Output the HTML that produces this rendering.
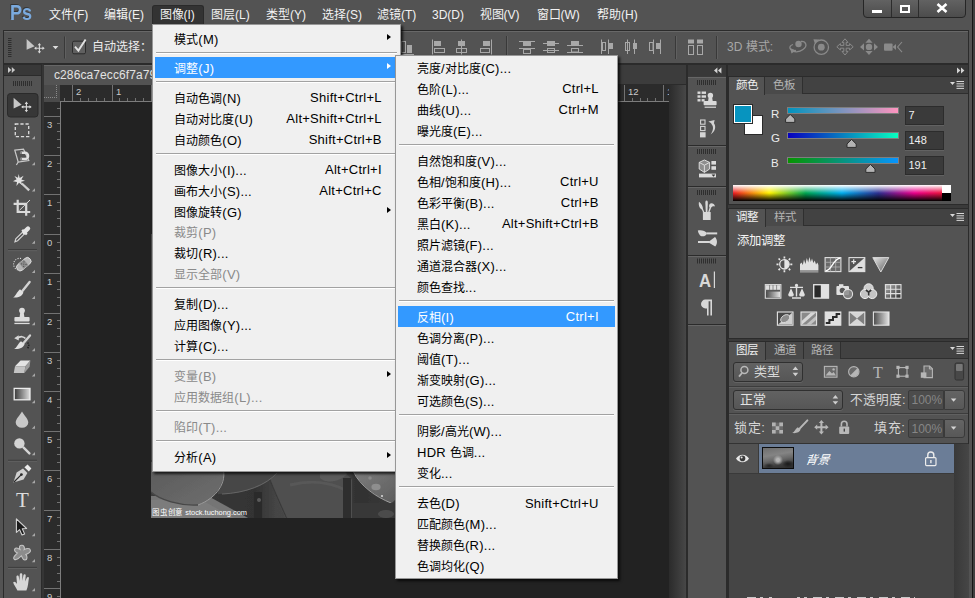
<!DOCTYPE html>
<html lang="zh-CN">
<head>
<meta charset="utf-8">
<title>Ps</title>
<style>
*{box-sizing:border-box;margin:0;padding:0}
html,body{width:975px;height:598px;overflow:hidden}
body{position:relative;background:#535353;font-family:"Liberation Sans",sans-serif;font-size:12px;color:#e4e4e4}
.abs{position:absolute}
/* ---------- menubar ---------- */
#menubar{position:absolute;left:0;top:0;width:975px;height:30px;background:#535353}
#menubar .mi{position:absolute;top:8px;height:14px;line-height:14px;font-size:12px;color:#f2f2f2;white-space:nowrap}
#pslogo{position:absolute;left:9.6px;top:0.5px;font-size:22px;line-height:24px;font-weight:bold;color:#7aaade;text-shadow:-1px -1px 0 rgba(30,30,30,.55);transform:scaleX(.82);transform-origin:0 0}
#mactive{position:absolute;left:152px;top:5px;width:52px;height:20px;background:#333;border:1px solid #2a2a2a;border-bottom:none;border-radius:3px 3px 0 0}
#winbtns{position:absolute;left:863px;top:-1px;width:103px;height:19px;border:1px solid #262626;border-radius:0 0 4px 4px;background:linear-gradient(#626262,#4c4c4c)}
#winbtns i{position:absolute;top:0;width:1px;height:17px;background:#2c2c2c}
/* ---------- option bar ---------- */
#optbar{position:absolute;left:3px;top:30px;width:966px;height:34px;border:1px solid #2b2b2b;background:#535353;box-shadow:inset 0 1px 0 #686868}
.vsep{position:absolute;width:1px;background:#3a3a3a;box-shadow:1px 0 0 #616161}
/* ---------- toolbar ---------- */
#tools{position:absolute;left:3px;top:64px;width:39px;height:540px;background:#535353;border:1px solid #2b2b2b}
#tools .hd{position:absolute;left:0;top:0;width:37px;height:11px;background:#383838;border-bottom:1px solid #2b2b2b}
.grip{position:absolute;height:5px;background:repeating-linear-gradient(90deg,#2e2e2e 0 1px,transparent 1px 2px)}
.tsep{position:absolute;left:4px;width:29px;height:1px;background:#3c3c3c;box-shadow:0 1px 0 #616161}
.tool{position:absolute;left:6px;width:26px;height:26px}
.tool svg{position:absolute;left:0;top:0}
.tri{position:absolute;right:-3px;bottom:-1px;width:0;height:0;border-left:4px solid transparent;border-bottom:4px solid #9a9a9a}
/* ---------- document ---------- */
#doc{position:absolute;left:42px;top:64px;width:645px;height:540px;background:#222;border:1px solid #2b2b2b;border-left:2px solid #353535;overflow:hidden}
#tabbar{position:absolute;left:0;top:0;width:642px;height:20px;background:#3c3c3c;border-bottom:1px solid #2b2b2b}
#tab{position:absolute;left:0;top:0;width:160px;height:20px;background:#535353;border-right:1px solid #2b2b2b;box-shadow:inset 0 1px 0 #666;font-size:12px;line-height:21px;padding-left:10px;color:#e2e2e2;white-space:nowrap;letter-spacing:.1px}
#hruler{position:absolute;left:16px;top:20px;width:610px;height:17px;background:#2b2b2b;border-bottom:1px solid #7c7c7c}
#vruler{position:absolute;left:0;top:37px;width:17px;height:520px;background:#2b2b2b;border-right:1px solid #7c7c7c}
#rcorner{position:absolute;left:0;top:20px;width:16px;height:17px;background:#4a4a4a}
.rl{position:absolute;font-size:9.5px;line-height:9px;color:#cacaca}
/* ---------- dock ---------- */
#dock{position:absolute;left:687px;top:64px;width:282px;height:540px;background:#3a3a3a;border:1px solid #2b2b2b}
#dockhd{position:absolute;left:0;top:0;width:280px;height:11px;background:#383838}
#strip{position:absolute;left:0;top:12px;width:38px;height:530px}
.sgrp{position:absolute;left:0;width:38px;background:#535353;border-top:1px solid #666;border-bottom:1px solid #2b2b2b}
.panel{position:absolute;left:40px;width:240px;background:#535353;border:1px solid #2b2b2b;border-right:none}
.ptabs{position:absolute;left:0;top:0;width:239px;height:17px;background:#424242;border-bottom:1px solid #2f2f2f}
.ptab{position:absolute;top:0;height:17px;line-height:17px;font-size:11.5px;text-align:center;color:#b4b4b4;background:#4a4a4a;border-right:1px solid #2f2f2f}
.ptab.on{background:#535353;color:#f0f0f0;height:18px}
.pmenu{position:absolute;right:4px;top:5px;width:14px;height:8px}
.inp{position:absolute;background:#3a3a3a;border:1px solid #2c2c2c;box-shadow:0 1px 0 #626262;color:#f0f0f0;font-size:11px;line-height:16px;padding-left:3px}
.drop{position:absolute;border:1px solid #303030;border-radius:3px;background:linear-gradient(#626262,#565656);box-shadow:0 1px 0 #646464}
/* ---------- popup menus ---------- */
.menu{position:absolute;background:#f0f0f0;border:1px solid #979797;box-shadow:2px 2px 2.5px rgba(0,0,0,.75);color:#000;font-size:12px}
.menu .it{position:relative;height:20.92px;line-height:20.92px;white-space:nowrap}
.menu .it span.l{position:absolute;top:2.0px}
.menu .it span.r{position:absolute;top:1.5px;text-align:right;font-size:13px;letter-spacing:.25px;margin-right:-.25px}
.menu .e{font-size:13px;letter-spacing:.25px}
#m2 .it{height:20.98px}
#m1 .sp:nth-child(2){height:8.3px}
#m2 .sp{height:9.25px}
.menu .it.dis{color:#8a8a8a}
.menu .it.hl{background:#3399ff;color:#fff}
.menu .sp{height:9.1px;position:relative}
.menu .sp i{position:absolute;left:1px;right:1px;top:3.3px;height:1px;background:#a2a2a2;box-shadow:0 1px 0 #fff}
.arr{position:absolute;top:6.3px;width:0;height:0;border-top:3.9px solid transparent;border-bottom:3.9px solid transparent;border-left:4.4px solid #000}
.hl .arr{border-left-color:#fff}
</style>
</head>
<body>
<!-- MENUBAR -->
<div id="menubar">
  <div id="pslogo">Ps</div>
  <div id="mactive"></div>
  <div class="mi" style="left:49px">文件(F)</div>
  <div class="mi" style="left:104px">编辑(E)</div>
  <div class="mi" style="left:159.5px">图像(I)</div>
  <div class="mi" style="left:211px">图层(L)</div>
  <div class="mi" style="left:266px">类型(Y)</div>
  <div class="mi" style="left:322px">选择(S)</div>
  <div class="mi" style="left:377px">滤镜(T)</div>
  <div class="mi" style="left:432px">3D(D)</div>
  <div class="mi" style="left:479.5px">视图(V)</div>
  <div class="mi" style="left:536.5px">窗口(W)</div>
  <div class="mi" style="left:597px">帮助(H)</div>
  <div id="winbtns"><i style="left:27px"></i><i style="left:54px"></i>
    <div class="abs" style="left:8px;top:10px;width:10px;height:3px;background:#fff"></div>
    <div class="abs" style="left:36px;top:5px;width:10px;height:8px;border:2px solid #fff"></div>
    <svg class="abs" style="left:72px;top:3px" width="12" height="10" viewBox="0 0 12 10"><path d="M1.5 1 L10.5 9 M10.5 1 L1.5 9" stroke="#fff" stroke-width="2.6"/></svg>
  </div>
</div>
<!-- OPTION BAR -->
<div id="optbar">
</div>
<!-- TOOLBAR -->
<div id="tools"><div class="hd"></div>
</div>
<!-- DOCUMENT -->
<div id="doc">
  <div id="tabbar"><div id="tab">c286ca7ecc6f7a79</div></div>
  <div id="hruler"></div>
  <div id="vruler"></div>
  <div id="rcorner"></div>
  <div class="abs" style="left:625px;top:20px;width:17px;height:520px;background:linear-gradient(90deg,#2b2b2b,#474747)"></div>
  <svg id="photo" class="abs" style="left:107px;top:169px" width="395" height="284" viewBox="151 234 395 284">
    <defs><filter id="bl" x="-5%" y="-5%" width="110%" height="110%"><feGaussianBlur stdDeviation="0.7"/></filter>
    <linearGradient id="lf1" x1="0" y1="0" x2="1" y2="1"><stop offset="0" stop-color="#5a5a5a"/><stop offset="1" stop-color="#6e6e6e"/></linearGradient>
    <linearGradient id="lf5" x1="0" y1="0" x2="1" y2="1"><stop offset="0" stop-color="#808080"/><stop offset="1" stop-color="#5c5c5c"/></linearGradient>
    <linearGradient id="bg0" x1="0" y1="0" x2="1" y2="0"><stop offset="0" stop-color="#3c3c3c"/><stop offset=".42" stop-color="#333"/><stop offset=".5" stop-color="#454545"/><stop offset=".78" stop-color="#484848"/><stop offset=".82" stop-color="#303030"/><stop offset="1" stop-color="#3c3c3c"/></linearGradient></defs>
    <rect x="151" y="234" width="395" height="284" fill="#4a4a4a"/>
    <g filter="url(#bl)">
    <rect x="151" y="460" width="250" height="60" fill="url(#bg0)"/>
    <!-- center big leaf -->
    <path d="M268 470 C300 462 345 466 352 480 L352 520 L286 520 C280 505 272 490 268 470 Z" fill="#4f4f4f"/>
    <path d="M270 480 C276 495 282 508 287 519" stroke="#3a3a3a" stroke-width="1.2" fill="none"/>
    <path d="M290 485 C310 480 330 482 345 490" stroke="#585858" stroke-width="3" fill="none"/>
    <!-- leaf 2 dark -->
    <path d="M212 466 C240 462 268 466 277 472 C268 486 245 494 218 494 Z" fill="#474747"/>
    <path d="M222 494 C246 493 266 485 277 473" stroke="#6a6a6a" stroke-width="0.9" fill="none"/>
    <!-- bottom-left light leaf -->
    <path d="M151 496 L208 496 L250 519 L151 519 Z" fill="#747474"/>
    <path d="M151 500 L196 497 L236 519 L151 519 Z" fill="#7c7c7c"/>
    <!-- leaf 1 -->
    <path d="M151 462 L222 462 C228 478 218 498 198 505 C180 506 160 500 151 492 Z" fill="url(#lf1)"/>
    <path d="M223 468 C227 482 217 498 198 505" stroke="#9a9a9a" stroke-width="1" fill="none"/>
    <path d="M151 492 C160 500 180 506 198 505" stroke="#474747" stroke-width="1.4" fill="none"/>
    <!-- dark gaps -->
    <rect x="254" y="492" width="8" height="28" fill="#2a2a2a"/>
    <circle cx="259" cy="500" r="2" fill="#5a5a5a"/>
    <rect x="343" y="478" width="8" height="42" fill="#2e2e2e"/>
    <!-- small top leaf -->
    <path d="M320 468 C330 466 343 468 347 474 C340 482 326 484 320 478 Z" fill="#5c5c5c"/>
    <!-- right leaf -->
    <path d="M352 468 L398 468 L398 494 C397 498 394 502 391 503 C375 496 358 484 352 468 Z" fill="url(#lf5)"/>
    <path d="M353 471 C360 486 376 497 391 503" stroke="#a8a8a8" stroke-width="0.9" fill="none"/>
    <ellipse cx="376" cy="487" rx="4.6" ry="3.2" fill="#8e8e8e"/><circle cx="370" cy="478" r="1.8" fill="#8a8a8a"/><circle cx="382" cy="496" r="1" fill="#ddd"/>
    <rect x="352" y="503" width="46" height="16" fill="#383838"/><ellipse cx="386" cy="514" rx="8" ry="4" fill="#4c4c4c"/>
    </g>
    <text x="152" y="514.8" font-family="Liberation Sans, sans-serif" font-size="7.6" fill="#fff" textLength="95" lengthAdjust="spacingAndGlyphs">图虫创意 stock.tuchong.com</text>
  </svg>
</div>
<!--RUL-->
<svg class="abs" style="left:0;top:0" width="975" height="598" viewBox="0 0 975 598" fill="none">
<path d="M44 97.5 H58" stroke="#8a8a8a" stroke-dasharray="1 1"/><path d="M56.5 85 V99" stroke="#8a8a8a" stroke-dasharray="1 1"/>
<path d="M64.5 98 V101 M72.5 85 V101 M80.5 98 V101 M88.5 98 V101 M96.5 98 V101 M104.5 98 V101 M112.5 85 V101 M119.5 98 V101 M127.5 98 V101 M135.5 98 V101 M143.5 98 V101 M151.5 85 V101 M159.5 98 V101 M167.5 98 V101 M175.5 98 V101 M183.5 98 V101 M190.5 85 V101 M198.5 98 V101 M206.5 98 V101 M214.5 98 V101 M222.5 98 V101 M230.5 85 V101 M238.5 98 V101 M246.5 98 V101 M253.5 98 V101 M261.5 98 V101 M269.5 85 V101 M277.5 98 V101 M285.5 98 V101 M293.5 98 V101 M301.5 98 V101 M309.5 85 V101 M316.5 98 V101 M324.5 98 V101 M332.5 98 V101 M340.5 98 V101 M348.5 85 V101 M356.5 98 V101 M364.5 98 V101 M372.5 98 V101 M380.5 98 V101 M387.5 85 V101 M395.5 98 V101 M403.5 98 V101 M411.5 98 V101 M419.5 98 V101 M427.5 85 V101 M435.5 98 V101 M443.5 98 V101 M450.5 98 V101 M458.5 98 V101 M466.5 85 V101 M474.5 98 V101 M482.5 98 V101 M490.5 98 V101 M498.5 98 V101 M506.5 85 V101 M513.5 98 V101 M521.5 98 V101 M529.5 98 V101 M537.5 98 V101 M545.5 85 V101 M553.5 98 V101 M561.5 98 V101 M569.5 98 V101 M577.5 98 V101 M584.5 85 V101 M592.5 98 V101 M600.5 98 V101 M608.5 98 V101 M616.5 98 V101 M624.5 85 V101 M632.5 98 V101 M640.5 98 V101 M647.5 98 V101 M655.5 98 V101 M663.5 85 V101" stroke="#727272"/>
<path d="M57 108.5 H60 M44 116.5 H60 M57 123.5 H60 M57 131.5 H60 M57 139.5 H60 M57 147.5 H60 M44 155.5 H60 M57 163.5 H60 M57 171.5 H60 M57 179.5 H60 M57 187.5 H60 M44 194.5 H60 M57 202.5 H60 M57 210.5 H60 M57 218.5 H60 M57 226.5 H60 M44 234.5 H60 M57 242.5 H60 M57 250.5 H60 M57 257.5 H60 M57 265.5 H60 M44 273.5 H60 M57 281.5 H60 M57 289.5 H60 M57 297.5 H60 M57 305.5 H60 M44 313.5 H60 M57 320.5 H60 M57 328.5 H60 M57 336.5 H60 M57 344.5 H60 M44 352.5 H60 M57 360.5 H60 M57 368.5 H60 M57 376.5 H60 M57 384.5 H60 M44 391.5 H60 M57 399.5 H60 M57 407.5 H60 M57 415.5 H60 M57 423.5 H60 M44 431.5 H60 M57 439.5 H60 M57 447.5 H60 M57 454.5 H60 M57 462.5 H60 M44 470.5 H60 M57 478.5 H60 M57 486.5 H60 M57 494.5 H60 M57 502.5 H60 M44 510.5 H60 M57 517.5 H60 M57 525.5 H60 M57 533.5 H60 M57 541.5 H60 M44 549.5 H60 M57 557.5 H60 M57 565.5 H60 M57 573.5 H60 M57 581.5 H60 M44 588.5 H60 M57 596.5 H60" stroke="#727272"/>
</svg>
<div class="abs" style="left:44px;top:85px;width:625px;height:520px;overflow:hidden">
<div class="rl" style="left:32px;top:2px">2</div>
<div class="rl" style="left:72px;top:2px">1</div>
<div class="rl" style="left:111px;top:2px">0</div>
<div class="rl" style="left:150px;top:2px">1</div>
<div class="rl" style="left:190px;top:2px">2</div>
<div class="rl" style="left:229px;top:2px">3</div>
<div class="rl" style="left:269px;top:2px">4</div>
<div class="rl" style="left:308px;top:2px">5</div>
<div class="rl" style="left:347px;top:2px">6</div>
<div class="rl" style="left:387px;top:2px">7</div>
<div class="rl" style="left:426px;top:2px">8</div>
<div class="rl" style="left:466px;top:2px">9</div>
<div class="rl" style="left:505px;top:2px">10</div>
<div class="rl" style="left:544px;top:2px">11</div>
<div class="rl" style="left:584px;top:2px">12</div>
<div class="rl" style="left:623px;top:2px">13</div>
<div class="rl" style="left:3px;top:34.5px">3</div>
<div class="rl" style="left:3px;top:73.5px">2</div>
<div class="rl" style="left:3px;top:112.5px">1</div>
<div class="rl" style="left:3px;top:152.5px">0</div>
<div class="rl" style="left:3px;top:191.5px">1</div>
<div class="rl" style="left:3px;top:231.5px">2</div>
<div class="rl" style="left:3px;top:270.5px">3</div>
<div class="rl" style="left:3px;top:309.5px">4</div>
<div class="rl" style="left:3px;top:349.5px">5</div>
<div class="rl" style="left:3px;top:388.5px">6</div>
<div class="rl" style="left:3px;top:428.5px">7</div>
<div class="rl" style="left:3px;top:467.5px">8</div>
<div class="rl" style="left:3px;top:506.5px">9</div>
</div>
<!--/RUL-->
<!-- DOCK -->
<div id="dock">
  <div id="dockhd"></div>
  <div class="abs" style="left:38px;top:0;width:2px;height:540px;background:#2b2b2b"></div>
  <div class="sgrp" style="top:12px;height:69px"></div>
  <div class="sgrp" style="top:81px;height:41px"></div>
  <div class="sgrp" style="top:122px;height:69px"></div>
  <div class="sgrp" style="top:191px;height:69px"></div>
  <div class="sgrp" style="top:260px;height:290px"></div>
  <!-- COLOR PANEL -->
  <div class="panel" style="top:11px;height:129px">
    <div class="ptabs"><div class="ptab on" style="left:0;width:36px">颜色</div><div class="ptab" style="left:36px;width:38px">色板</div></div>
    <div class="abs" style="left:14.5px;top:38px;width:19.5px;height:20px;background:#fff;border:1px solid #2a2a2a"></div>
    <div class="abs" style="left:4.5px;top:27.5px;width:18.5px;height:18.5px;background:#0794bf;border:1px solid #fff;outline:1px solid #2a2a2a"></div>
    <div class="abs" style="left:42px;top:29.5px;font-size:11.5px;line-height:14px;color:#ececec">R</div>
    <div class="abs" style="left:42px;top:54px;font-size:11.5px;line-height:14px;color:#ececec">G</div>
    <div class="abs" style="left:42px;top:79px;font-size:11.5px;line-height:14px;color:#ececec">B</div>
    <div class="abs" style="left:58px;top:30px;width:112px;height:6.5px;border:1px solid #7e7e7e;background:linear-gradient(90deg,#0094bf,#ff94bf)"></div>
    <div class="abs" style="left:58px;top:55px;width:112px;height:6.5px;border:1px solid #7e7e7e;background:linear-gradient(90deg,#0700bf,#07ffbf)"></div>
    <div class="abs" style="left:58px;top:80px;width:112px;height:6.5px;border:1px solid #7e7e7e;background:linear-gradient(90deg,#079400,#0794ff)"></div>
    <div class="inp" style="left:175.5px;top:28.5px;width:39px;height:19px">7</div>
    <div class="inp" style="left:175.5px;top:53.5px;width:39px;height:19px">148</div>
    <div class="inp" style="left:175.5px;top:78.5px;width:39px;height:19px">191</div>
    <div class="abs" style="left:4px;top:108px;width:218px;height:16px;background:linear-gradient(180deg,#fff 0,rgba(255,255,255,0) 50%,rgba(0,0,0,0) 50%,#000 100%),linear-gradient(90deg,#ed1c24 0,#fff200 16.6%,#00a651 33.3%,#00aeef 50%,#2e3192 66.6%,#ec008c 83.3%,#ed1c24 100%)"></div>
    <div class="abs" style="left:213px;top:108px;width:9px;height:8px;background:#fff"></div>
    <div class="abs" style="left:213px;top:116px;width:9px;height:8px;background:#000"></div>
  </div>
  <!-- ADJUST PANEL -->
  <div class="panel" style="top:143px;height:131px">
    <div class="ptabs"><div class="ptab on" style="left:0;width:37px">调整</div><div class="ptab" style="left:37px;width:38px">样式</div></div>
    <div class="abs" style="left:8px;top:24.5px;font-size:12.4px;line-height:14px;color:#f4f4f4;white-space:nowrap">添加调整</div>
  </div>
  <!-- LAYERS PANEL -->
  <div class="panel" style="top:276px;height:270px">
    <div class="ptabs"><div class="ptab on" style="left:0;width:37px">图层</div><div class="ptab" style="left:37px;width:38px">通道</div><div class="ptab" style="left:75px;width:37px">路径</div></div>
    <div class="drop" style="left:4px;top:20px;width:70px;height:19.5px"></div>
    <div class="abs" style="left:24.5px;top:22.5px;font-size:13px;line-height:14px;color:#d8d8d8;white-space:nowrap">类型</div>
    <div class="abs" style="left:0;top:43.5px;width:239px;height:1px;background:#3c3c3c;box-shadow:0 1px 0 #606060"></div>
    <div class="drop" style="left:4px;top:48px;width:110px;height:20px"></div>
    <div class="abs" style="left:11px;top:51px;font-size:13px;line-height:14px;color:#e2e2e2;white-space:nowrap">正常</div>
    <div class="abs" style="left:121px;top:51px;font-size:12.7px;line-height:14px;color:#d6d6d6;white-space:nowrap">不透明度:</div>
    <div class="abs" style="left:178.5px;top:48px;width:36px;height:20px;background:#4c4c4c;border:1px solid #3a3a3a;border-radius:2px 0 0 2px;font-size:12px;line-height:19px;color:#868686;padding-left:3px">100%</div>
    <div class="abs" style="left:214.5px;top:48px;width:21px;height:20px;border:1px solid #3a3a3a;border-radius:0 3px 3px 0;background:linear-gradient(#646464,#585858)"></div>
    <div class="abs" style="left:0;top:71px;width:239px;height:1px;background:#3c3c3c;box-shadow:0 1px 0 #606060"></div>
    <div class="abs" style="left:5px;top:78.5px;font-size:13px;line-height:14px;color:#d6d6d6;white-space:nowrap;letter-spacing:.6px">锁定:</div>
    <div class="abs" style="left:145px;top:78.5px;font-size:13px;line-height:14px;color:#d6d6d6;white-space:nowrap;letter-spacing:.6px">填充:</div>
    <div class="abs" style="left:178.5px;top:76.5px;width:36px;height:19.5px;background:#4c4c4c;border:1px solid #3a3a3a;border-radius:2px 0 0 2px;font-size:12px;line-height:19px;color:#868686;padding-left:3px">100%</div>
    <div class="abs" style="left:214.5px;top:76.5px;width:21px;height:19.5px;border:1px solid #3a3a3a;border-radius:0 3px 3px 0;background:linear-gradient(#646464,#585858)"></div>
    <div class="abs" style="left:0;top:101px;width:239px;height:171px;background:#454545;border-top:1px solid #333"></div>
    <div class="abs" style="left:224.5px;top:102px;width:15px;height:171px;background:linear-gradient(90deg,#393939,#464646)"></div>
    <div class="abs" style="left:0;top:102px;width:30px;height:30px;background:#535353;border-right:1px solid #3a3a3a;border-bottom:1px solid #3a3a3a"></div>
    <div class="abs" style="left:30px;top:102px;width:194.5px;height:30px;background:#6b7d97;border-bottom:1px solid #3a3a3a"></div>
    <div class="abs" style="left:32.5px;top:105px;width:32.5px;height:22px;border:1px solid #0c0c0c;background:radial-gradient(ellipse 5px 5px at 15px 12px,#b4b4b4 30%,rgba(150,150,150,0) 100%),radial-gradient(ellipse 6px 4px at 25px 16px,#1e1e1e 20%,rgba(40,40,40,0) 100%),radial-gradient(ellipse 5px 3px at 6px 18px,#2a2a2a 20%,rgba(40,40,40,0) 100%),linear-gradient(170deg,#6e6e6e 0,#848484 35%,#6a6a6a 55%,#3a3a3a 80%,#2c2c2c 100%)"></div>
    <div class="abs" style="left:77px;top:110.5px;font-size:12px;line-height:14px;color:#fff;font-style:italic;white-space:nowrap;transform:skewX(-8deg)">背景</div>
  </div>
</div>
<!--DI-->
<svg class="abs" style="left:0;top:0" width="975" height="598" viewBox="0 0 975 598" fill="none">
<defs>
<linearGradient id="g1" x1="0" x2="1" y1="0" y2="0"><stop offset="0" stop-color="#4a4a4a"/><stop offset="1" stop-color="#e4e4e4"/></linearGradient>
<linearGradient id="g3" x1="0" x2="1" y1="0" y2="1"><stop offset="0" stop-color="#b0b0b0"/><stop offset="1" stop-color="#2a2a2a"/></linearGradient>
<linearGradient id="g2" x1="0" x2="1" y1="0" y2="1"><stop offset="0" stop-color="#e8e8e8"/><stop offset="1" stop-color="#5a5a5a"/></linearGradient>
<path id="th" d="M0 0 L4.6 4.6 V8 H-4.6 V4.6 Z" fill="#b4b4b4" stroke="#2e2e2e" stroke-width="1"/>
<g id="pm"><path d="M0 1 H5 L2.5 4 Z" fill="#d8d8d8"/><path d="M6.5 0.5 H14 M6.5 2.8 H14 M6.5 5.1 H14 M6.5 7.4 H14" stroke="#d8d8d8" stroke-width="1"/></g>
<g id="sg"><path d="M0.5 0 V5 M2.5 0 V5 M4.5 0 V5 M6.5 0 V5 M8.5 0 V5 M10.5 0 V5 M12.5 0 V5 M14.5 0 V5 M16.5 0 V5 M18.5 0 V5" stroke="#2e2e2e"/></g>
<g id="ud"><path d="M0 3.4 L2.8 0 L5.6 3.4 Z M0 6.2 L2.8 9.6 L5.6 6.2 Z" fill="#cfcfcf"/></g>
</defs>
<!-- header arrows -->
<path d="M717.4 67.4 V73.4 L714 70.4 Z M721.4 67.4 V73.4 L718 70.4 Z" fill="#d4d4d4"/>
<path d="M957 67.4 V73.4 L960.4 70.4 Z M961 67.4 V73.4 L964.4 70.4 Z" fill="#d4d4d4"/>
<!-- strip grips -->
<use href="#sg" x="697" y="80"/><use href="#sg" x="697" y="149"/><use href="#sg" x="697" y="190"/><use href="#sg" x="697" y="258.5"/>
<!-- strip icon 1: history (list + stamp) -->
<g fill="#dadada"><rect x="697.5" y="91.5" width="3" height="2.4"/><rect x="697.5" y="95.3" width="3" height="2.4"/><rect x="697.5" y="99.1" width="3" height="2.4"/><rect x="701.6" y="91.5" width="4.4" height="2.4"/><rect x="701.6" y="95.3" width="4.4" height="2.4"/><rect x="701.6" y="99.1" width="3" height="2.4"/>
<circle cx="710.4" cy="95.4" r="2.7"/><path d="M708.8 96.5 H712 L712.8 101.4 H708 Z"/><rect x="703.6" y="101" width="13" height="4.2" rx="0.8"/><rect x="704.6" y="106.6" width="11.4" height="1.2"/></g>
<!-- strip icon 2: actions -->
<g stroke="#d4d4d4" stroke-width="1.1"><rect x="700.6" y="120" width="4.4" height="4.2"/><rect x="700.6" y="126.4" width="4.4" height="4.2"/></g><rect x="700" y="132.2" width="5.6" height="5.2" fill="#d4d4d4"/>
<path d="M711 121.4 C716.4 122.6 717 130.4 710.6 134.4 C713.4 130.4 713.8 126.4 711.6 124.2 Z" fill="#d4d4d4"/><path d="M708.4 121.6 L714.6 120 L713.6 124.8 Z" fill="#d4d4d4"/>
<!-- strip icon 3: 3D -->
<g><path d="M704.4 160 L709.6 162.4 V169 L704.4 172.4 L699.2 169 V162.4 Z" fill="#8e8e8e" stroke="#dcdcdc" stroke-width="1"/><path d="M699.2 162.4 L704.4 165.2 L709.6 162.4 M704.4 165.2 V172.4" stroke="#dcdcdc" stroke-width="1"/><rect x="711.4" y="161" width="4.6" height="3.6" fill="#dcdcdc"/><rect x="711.4" y="166.2" width="4.6" height="3.6" fill="#dcdcdc"/><rect x="699" y="173.6" width="17" height="3.8" fill="#dcdcdc"/><path d="M711.6 174.6 H715.4 L713.5 176.8 Z" fill="#333"/></g>
<!-- strip icon 4: brush presets (cup with brushes) -->
<g fill="#d8d8d8"><rect x="702.9" y="212" width="7.8" height="8" rx="0.6"/>
<path d="M699 201.8 C701.4 203.4 703 206.4 703 209 L704.6 212.4 H703.2 L701.8 209.6 C699.6 208.6 698.2 205 699 201.8 Z"/>
<path d="M706.5 200.4 C707.8 200.4 708 202 707.8 204 L707.4 212.4 H705.8 L705.4 204 C705.2 202 705.4 200.4 706.5 200.4 Z"/>
<path d="M709.4 204.4 C711 202.4 714.4 203.4 715 206.6 C713.4 206 711.6 206.6 711 208 L709.4 212.4 H708 L709.6 207.6 C709 206.6 709 205.2 709.4 204.4 Z"/></g>
<!-- strip icon 5: brush -->
<g fill="#d8d8d8"><path d="M697.8 230.4 C701 229.6 705.4 230.6 707 233 C706.6 235.6 703.6 236.8 701.4 236.2 C699.4 235.4 698.4 233 697.8 230.4 Z"/><rect x="706.6" y="232.4" width="10.6" height="2"/>
<rect x="698" y="241" width="11.6" height="2"/><path d="M709 241.4 L715 237 C717.6 239.6 717.6 244 715.2 246.6 L709 242.8 Z"/></g>
<!-- strip icon 6: A| -->
<text x="699" y="287" font-family="Liberation Sans, sans-serif" font-size="19" font-weight="bold" fill="#d8d8d8" transform="translate(699 0) scale(.88 1) translate(-699 0)">A</text><path d="M714.4 271.6 V288" stroke="#d8d8d8" stroke-width="1.2"/>
<!-- strip icon 7: pilcrow -->
<path d="M705.4 299.6 H712 V315.4 H710.4 V301.2 H708.6 V315.4 H707 V308.4 H705.4 A4.4 4.4 0 0 1 705.4 299.6 Z" fill="#d8d8d8"/>
<!-- panel menus -->
<use href="#pm" x="950" y="81"/><use href="#pm" x="950" y="213"/><use href="#pm" x="950" y="346"/>
<!-- slider thumbs -->
<use href="#th" x="790.2" y="114.4"/><use href="#th" x="851.6" y="139.4"/><use href="#th" x="870.4" y="164.4"/>
<!-- ===== adjustment icons row1 ===== -->
<g>
<circle cx="784.4" cy="264.3" r="4.7" fill="#535353" stroke="#e6e6e6" stroke-width="1.3"/><path d="M784.4 259.6 A4.7 4.7 0 0 1 784.4 269 Z" fill="#e6e6e6"/><path d="M784.4 256.4 V258.4 M784.4 270.2 V272.2 M776.5 264.3 H778.5 M790.3 264.3 H792.3 M778.6 258.5 L780 259.9 M788.8 268.7 L790.2 270.1 M778.6 270.1 L780 268.7 M788.8 259.9 L790.2 258.5" stroke="#e6e6e6" stroke-width="1.7"/>
<path d="M800 270.6 V264 L801.6 262.6 L802.8 265 L804 259.4 L805.4 264 L806.8 258 L808.2 262.6 L809.4 257 L810.8 262 L812 258.6 L813.4 263 L814.8 260.6 L816 264.4 L817.4 262.6 L818.4 265 V270.6 Z" fill="#e0e0e0"/><path d="M800 271.9 H818.4" stroke="#bdbdbd"/>
<rect x="825.1" y="257.6" width="15.8" height="14" fill="#6a6a6a" stroke="#e0e0e0" stroke-width="1.1"/><path d="M825.1 262.3 H840.9 M825.1 267 H840.9 M830.4 257.6 V271.6 M835.7 257.6 V271.6" stroke="#b0b0b0" stroke-width="0.8"/><path d="M825.6 271 C832 270.6 833 258.6 840.4 258.2" stroke="#fff" stroke-width="1.3"/>
<rect x="849" y="257.6" width="15.8" height="14" fill="#535353" stroke="#e0e0e0" stroke-width="1.1"/><path d="M849 271.6 L864.8 257.6 V271.6 Z" fill="#e0e0e0"/><path d="M851.4 261.6 H856 M853.7 259.3 V263.9" stroke="#e8e8e8" stroke-width="1.2"/><path d="M857.8 267.6 H862.4" stroke="#333" stroke-width="1.3"/>
<path d="M872.8 257.6 H888.8 L880.8 272 Z" fill="url(#g2)" stroke="#d8d8d8" stroke-width="1"/>
</g>
<!-- row2 -->
<g>
<rect x="765.3" y="284.6" width="15.6" height="13.6" fill="#5a5a5a" stroke="#dcdcdc" stroke-width="1.1"/><rect x="766" y="285.2" width="14.2" height="4.6" fill="#e0e0e0"/><rect x="766" y="291.6" width="14.2" height="5.8" fill="url(#g1)"/><path d="M769.6 285 V290 M773 285 V290 M776.6 285 V290" stroke="#777" stroke-width="0.8"/>
<path d="M796.5 284 V296.6 M790 287.4 H803 M792 298 H801" stroke="#e0e0e0" stroke-width="1.4"/><circle cx="796.5" cy="285.4" r="1.6" fill="#e0e0e0"/><path d="M788.2 294.4 L791 288.2 L793.8 294.4 A2.8 2.2 0 0 1 788.2 294.4 Z M799.2 294.4 L802 288.2 L804.8 294.4 A2.8 2.2 0 0 1 799.2 294.4 Z" fill="#e0e0e0"/>
<rect x="813.6" y="284.6" width="15" height="13.6" fill="#e2e2e2" stroke="#e2e2e2" stroke-width="1.1"/><rect x="814.4" y="285.4" width="6.4" height="12" fill="#2a2a2a"/>
<rect x="836.4" y="286" width="12.6" height="9" rx="1" fill="#e0e0e0"/><rect x="839" y="284.2" width="4.4" height="2.4" fill="#e0e0e0"/><circle cx="842.4" cy="290.4" r="2.7" fill="#555"/><circle cx="848" cy="294" r="4.6" fill="#8a8a8a" fill-opacity=".85" stroke="#e0e0e0" stroke-width="1.1"/>
<circle cx="868.6" cy="288.4" r="4.6" fill="#cdcdcd" stroke="#ececec" stroke-width="1"/><circle cx="865" cy="294" r="4.6" fill="#c4c4c4" stroke="#ececec" stroke-width="1"/><circle cx="872.2" cy="294" r="4.6" fill="#c4c4c4" stroke="#ececec" stroke-width="1"/><path d="M866 290 L868.6 292.2 L871.2 290 M868.6 292.2 V295.6" stroke="#333" stroke-width="1.7" fill="none"/>
<rect x="885.4" y="284.6" width="15.6" height="13.6" fill="url(#g3)" stroke="#e0e0e0" stroke-width="1.1"/><path d="M885.4 289.2 H901 M885.4 293.6 H901 M890.6 284.6 V298.2 M895.8 284.6 V298.2" stroke="#e0e0e0" stroke-width="1.1"/>
</g>
<!-- row3 -->
<g>
<rect x="777.4" y="312" width="15.6" height="13.2" fill="#484848" stroke="#e4e4e4" stroke-width="1.1"/><path d="M778 324.6 V318 L785 312.6 H792.4 Z" fill="#d4d4d4" opacity=".0"/><path d="M778 324.6 L792.4 312.6 V324.6 Z" fill="#cfcfcf"/><ellipse cx="785.2" cy="318.6" rx="5" ry="3.4" fill="#8c8c8c" stroke="#e0e0e0" stroke-width=".8" transform="rotate(-35 785.2 318.6)"/>
<rect x="801" y="312" width="15.6" height="13.2" fill="#8a8a8a" stroke="#e4e4e4" stroke-width="1.1"/><path d="M801.6 321 L811 312.6 H816 L801.6 325 Z" fill="#d6d6d6"/><path d="M806 324.8 L816 316 V320 L810.6 324.8 Z" fill="#c2c2c2"/>
<rect x="825.2" y="312" width="15.6" height="13.2" fill="#e0e0e0" stroke="#e4e4e4" stroke-width="1.1"/><path d="M825.8 323 H829.4 V320 H833 V317 H836.6 V314 H840.2" stroke="#2a2a2a" stroke-width="2"/>
<rect x="849.2" y="312" width="15.6" height="13.2" fill="#d6d6d6" stroke="#e4e4e4" stroke-width="1.1"/><path d="M849.8 312.6 L857 318.6 L849.8 324.6 Z M864.2 312.6 L857 318.6 L864.2 324.6 Z" fill="#7e7e7e"/>
<rect x="873.4" y="312" width="15.6" height="13.2" fill="url(#g1)" stroke="#e4e4e4" stroke-width="1.1"/>
</g>
<!-- ===== layers panel icons ===== -->
<circle cx="744.4" cy="370" r="3.5" stroke="#b8b8b8" stroke-width="1.5"/><path d="M742 373 L739 376.6" stroke="#b8b8b8" stroke-width="1.8"/>
<use href="#ud" x="792.6" y="366.6"/>
<use href="#ud" x="832.6" y="395"/>
<!-- filter icons -->
<g>
<rect x="824.4" y="366.4" width="12.6" height="10.8" fill="#6a6a6a" stroke="#b6b6b6" stroke-width="1.1"/><path d="M825.6 375.6 L829.4 371 L832 373.6 L833.6 372 L836 375.6 Z" fill="#b6b6b6"/><circle cx="833.6" cy="369.4" r="1.2" fill="#b6b6b6"/>
<circle cx="853.8" cy="371.8" r="5.2" fill="#6a6a6a" stroke="#b6b6b6" stroke-width="1.1"/><path d="M857.4 368.2 A5.1 5.1 0 0 1 850.2 375.4 Z" fill="#b6b6b6"/>
<text x="878" y="377.6" font-family="Liberation Serif, serif" font-size="16" text-anchor="middle" fill="#b6b6b6">T</text>
<rect x="898.4" y="367.6" width="8.6" height="8.6" stroke="#b6b6b6" stroke-width="1.1"/><rect x="896.4" y="365.8" width="3.2" height="3.2" fill="#b6b6b6"/><rect x="905.4" y="365.8" width="3.2" height="3.2" fill="#b6b6b6"/><rect x="896.4" y="374.6" width="3.2" height="3.2" fill="#b6b6b6"/><rect x="905.4" y="374.6" width="3.2" height="3.2" fill="#b6b6b6"/>
<path d="M924 366 H929.6 L932.4 368.8 V377.6 H924 Z" fill="#6a6a6a" stroke="#b6b6b6" stroke-width="1.1"/><path d="M929.4 366 V369 H932.4" stroke="#b6b6b6" stroke-width="1"/><rect x="920.8" y="372.4" width="5.6" height="5.4" fill="#b6b6b6"/>
</g>
<!-- filter toggle -->
<rect x="955" y="363" width="8.6" height="17" rx="1.5" fill="#484848" stroke="#333"/><rect x="956" y="364" width="6.6" height="7" rx="1" fill="#777"/>
<!-- dropdown arrows for opacity/fill -->
<path d="M950.8 398.6 H956.4 L953.6 401.8 Z M950.8 426.6 H956.4 L953.6 429.8 Z" fill="#d4d4d4"/>
<!-- lock icons -->
<g>
<rect x="772" y="422.6" width="11" height="11" fill="#6a6a6a"/><path d="M772 422.6 h3.7 v3.7 h-3.7 Z M779.3 422.6 h3.7 v3.7 h-3.7 Z M775.7 426.3 h3.6 v3.6 h-3.6 Z M772 429.9 h3.7 v3.7 h-3.7 Z M779.3 429.9 h3.7 v3.7 h-3.7 Z" fill="#b2b2b2"/>
<path d="M807.4 420.4 L799.6 428.6" stroke="#b8b8b8" stroke-width="2" stroke-linecap="round"/><path d="M800.6 429.6 C799.8 432.4 796 433.6 792.2 433 C794.6 432 795 429.2 797.8 427.2 Z" fill="#b8b8b8"/>
<path d="M821.4 420 L824 423 H822.4 V426.2 H825.6 V424.6 L828.6 427.2 L825.6 429.8 V428.2 H822.4 V431.4 H824 L821.4 434.4 L818.8 431.4 H820.4 V428.2 H817.2 V429.8 L814.2 427.2 L817.2 424.6 V426.2 H820.4 V423 H818.8 Z" fill="#b8b8b8"/>
<rect x="839.2" y="426.4" width="10" height="7.6" rx="1" fill="#b8b8b8"/><path d="M841.4 426.4 V424 A2.8 2.8 0 0 1 847 424 V426.4" stroke="#b8b8b8" stroke-width="1.6"/><rect x="843.6" y="428.6" width="1.4" height="3" fill="#444"/>
</g>
<!-- eye -->
<path d="M736 458.6 C739 453.4 746 453.4 749 458.6 C746 463.6 739 463.6 736 458.6 Z" fill="#e8e8e8"/><circle cx="742.5" cy="458.4" r="2.8" fill="#3a3a3a"/><circle cx="741.6" cy="457.4" r="1" fill="#e8e8e8"/>
<!-- layer lock -->
<rect x="925.6" y="457.6" width="10.4" height="8" rx="1" fill="none" stroke="#ececec" stroke-width="1.2"/><path d="M927.8 457.4 V455 A3 3 0 0 1 933.8 455 V457.4" stroke="#ececec" stroke-width="1.4"/><rect x="930.2" y="460" width="1.4" height="3.2" fill="#ececec"/>
</svg>
<!--/DI-->
<!--OPT-->
<div class="abs" style="left:92px;top:40px;height:14px;line-height:14px;font-size:12px;color:#ececec;white-space:nowrap">自动选择：</div>
<div class="abs" style="left:727px;top:39.5px;height:14px;line-height:14px;font-size:12px;color:#a6a6a6;white-space:nowrap">3D 模式:</div>
<svg class="abs" style="left:0;top:0" width="975" height="598" viewBox="0 0 975 598" fill="none">
<g stroke="#a8a8a8" stroke-width="1" fill="#a8a8a8">
<!-- align bottom (partly hidden) -->
<rect x="401.5" y="41.5" width="4" height="11" fill="none"/><rect x="407" y="45" width="5" height="8" stroke="none"/><path d="M400 54.5 H414" />
<!-- align left -->
<path d="M432.5 39.5 V54.5"/><rect x="434" y="41" width="7" height="5" stroke="none"/><rect x="434.5" y="48.5" width="10" height="4" fill="none"/>
<!-- align hcenter -->
<path d="M461.5 39.5 V54.5"/><rect x="458" y="41" width="7" height="5" stroke="none"/><rect x="456.5" y="48.5" width="10" height="4" fill="none"/>
<!-- align right -->
<path d="M491.5 39.5 V54.5"/><rect x="483" y="41" width="7" height="5" stroke="none"/><rect x="480.5" y="48.5" width="9" height="4" fill="none"/>
<!-- distribute top -->
<path d="M519 41.5 H535 M519 48.5 H535"/><rect x="523" y="42" width="8" height="4" stroke="none"/><rect x="523.5" y="49.5" width="7" height="4" fill="none"/>
<!-- distribute vcenter -->
<path d="M543 43.5 H559 M543 50.5 H559"/><rect x="547" y="41" width="8" height="5" stroke="none"/><rect x="547.5" y="48.5" width="7" height="4" fill="none"/>
<!-- distribute bottom -->
<path d="M567 45.5 H583 M567 52.5 H583"/><rect x="571" y="41" width="8" height="4" stroke="none"/><rect x="571.5" y="48.5" width="7" height="3.5" fill="none"/>
<!-- distribute left -->
<path d="M601.5 39.5 V54 M608.5 39.5 V54"/><rect x="602.5" y="42.5" width="3" height="8" fill="none"/><rect x="609" y="43" width="4" height="6" stroke="none"/>
<!-- distribute hcenter -->
<path d="M627.5 39.5 V54 M634.5 39.5 V54"/><rect x="625.5" y="42.5" width="4" height="8" fill="none"/><rect x="633" y="43" width="4" height="6" stroke="none"/>
<!-- distribute right -->
<path d="M653.5 39.5 V54 M660.5 39.5 V54"/><rect x="649.5" y="42.5" width="3.5" height="8" fill="none"/><rect x="656" y="43" width="4" height="6" stroke="none"/>
<!-- auto align -->
<rect x="688" y="39.5" width="6" height="4" stroke="none"/><rect x="697" y="39.5" width="6" height="4" stroke="none"/><rect x="688.5" y="45.5" width="5" height="9" fill="none"/><rect x="697.5" y="45.5" width="5" height="9" fill="none"/>
</g>
<path d="M506.5 36 V59 M675.5 36 V59 M716.5 36 V59" stroke="#393939"/><path d="M507.5 36 V59 M676.5 36 V59 M717.5 36 V59" stroke="#606060"/>
<!-- 3D icons -->
<g stroke="#8a8a8a" fill="none" stroke-width="1.3">
<circle cx="798.5" cy="44" r="3.2" fill="#8a8a8a" stroke="none"/><path d="M793 44.5 C788 46 789 51 796 50.5 M801 41.5 C806 41 808 46 803 49.5 C800 52 795 52 792 51"/><path d="M790 48 L796 50.5 L791.5 53.5 Z" fill="#8a8a8a" stroke="none"/>
<circle cx="821.3" cy="47.2" r="7.2"/><circle cx="821.3" cy="47.2" r="3.4" fill="#8a8a8a" stroke="none"/><path d="M813.4 39.2 L819 39.6 L815 44 Z" fill="#8a8a8a" stroke="none"/>
<path d="M845 38.8 L848 42.4 H846.2 V45.4 H849.6 V43.6 L853.2 46.8 L849.6 50 V48.2 H846.2 V51.4 H848 L845 55 L842 51.4 H843.8 V48.2 H840.4 V50 L836.8 46.8 L840.4 43.6 V45.4 H843.8 V42.4 H842 Z" stroke-width="1"/>
<path d="M869 38.8 L872.6 42.8 H865.4 Z M869 55 L872.6 51 H865.4 Z M860 46.9 L864 43.3 V50.5 Z M878 46.9 L874 43.3 V50.5 Z" fill="#8a8a8a" stroke="none"/><circle cx="869" cy="46.9" r="3.2" fill="#8a8a8a" stroke="none"/>
<rect x="884" y="43.4" width="8.6" height="7.4" rx="1" fill="#8a8a8a" stroke="none"/><path d="M892.6 47 L896 44 V50 Z" fill="#8a8a8a" stroke="none"/><path d="M902 42 L897.6 47 L902 52.2" stroke-width="1.1"/>
</g>
</svg>
<!--/OPT-->
<!--TOOLS_SVG-->
<svg class="abs" style="left:0;top:0" width="975" height="598" viewBox="0 0 975 598" fill="none">
<defs>
<linearGradient id="gg" x1="0" x2="1" y1="0" y2="0"><stop offset="0" stop-color="#383838"/><stop offset="1" stop-color="#dedede"/></linearGradient>
<g id="mv"><path d="M-8.4 -6.8 L-8.4 3.9 L-0.4 0.3 Z" fill="#c6c6c6"/><path d="M4.4 -1.9 V6.7 M0.1 2.4 H8.7" stroke="#d8d8d8" stroke-width="1.1"/><path d="M4.4 -2.9 L6.1 -0.6 H2.7 Z M4.4 7.7 L6.1 5.4 H2.7 Z M-0.9 2.4 L1.4 0.7 V4.1 Z M9.7 2.4 L7.4 0.7 V4.1 Z" fill="#d8d8d8"/></g>
<path id="tri" d="M3.2 -1.2 V2 H0 Z" fill="#a8a8a8"/>
</defs>
<!-- toolbar header arrows -->
<path d="M8 67 L11.3 70 L8 73 Z M11.8 67 L15.1 70 L11.8 73 Z" fill="#c8c8c8"/>
<!-- toolbar grip -->
<path d="M13.5 81 V86 M15.5 81 V86 M17.5 81 V86 M19.5 81 V86 M21.5 81 V86 M23.5 81 V86 M25.5 81 V86 M27.5 81 V86 M29.5 81 V86 M31.5 81 V86" stroke="#2e2e2e" stroke-width="1"/>
<!-- selected move tool -->
<rect x="7.5" y="93.5" width="30.5" height="23.5" rx="3" fill="#373737" stroke="#2a2a2a"/>
<use href="#mv" x="22" y="104.5"/>
<!-- marquee -->
<rect x="15.3" y="124" width="13.4" height="12.6" stroke="#dcdcdc" stroke-width="1.3" stroke-dasharray="3.2 1.9"/>
<use href="#tri" x="31.8" y="137.2"/>
<!-- lasso -->
<g transform="translate(22,156)"><path d="M-7.2 -5.8 L1.5 -6.8 L6.8 4.6 L-3.8 6 Z" stroke="#c8c8c8" stroke-width="1.2"/><path d="M-3.8 6 L-5.6 9" stroke="#c8c8c8" stroke-width="1.2"/><path d="M-1.2 -3.2 H3 A3.1 3.1 0 0 1 3 3 H-1.2" stroke="#e0e0e0" stroke-width="2.4"/><path d="M-1.8 -3.2 H0 M-1.8 3 H0" stroke="#8a8a8a" stroke-width="2.4"/></g>
<use href="#tri" x="31.8" y="163.2"/>
<!-- wand -->
<g transform="translate(22,182.3)"><path d="M-3.4 -8.3 L-2.3 -4.4 L1.6 -6.6 L-0.6 -2.8 L3 -1.6 L-0.8 -0.6 L0.3 3 L-3 0.5 L-5.6 3.6 L-5 -0.4 L-9 -1 L-5.4 -3 L-7.6 -6.4 L-4 -4.6 Z" fill="#e2e2e2"/><path d="M-0.2 1.2 L7.2 8" stroke="#d0d0d0" stroke-width="2.3"/></g>
<use href="#tri" x="31.8" y="189.5"/>
<!-- crop -->
<g transform="translate(22,208)" stroke="#dadada"><path d="M-4.3 -8.2 V4 H8.2" stroke-width="2.2"/><path d="M-8.4 -4.2 H4.2 V7.8" stroke-width="2.2"/><path d="M-2.6 2.4 L8 -8" stroke-width="1"/></g>
<use href="#tri" x="31.8" y="215.2"/>
<!-- eyedropper -->
<g transform="translate(22,234.5)"><path d="M-7 7.2 L-6.2 4.4 L1.2 -3 L3 -1.2 L-4.4 6.2 Z" fill="#4a4a4a" stroke="#d4d4d4" stroke-width="1.2"/><path d="M0.2 -4.6 L4.8 0" stroke="#e4e4e4" stroke-width="2.4"/><path d="M2.4 -2.4 L6 -6" stroke="#e4e4e4" stroke-width="4.4" stroke-linecap="round"/></g>
<use href="#tri" x="31.8" y="241.7"/>
<!-- sep -->
<path d="M8 249.7 H37" stroke="#3a3a3a"/><path d="M8 250.7 H37" stroke="#626262"/>
<!-- heal -->
<g transform="translate(22,263.8)"><path d="M-4.2 6.2 A5.6 5.6 0 1 1 -0.6 -5.2" stroke="#d8d8d8" stroke-width="1.1" stroke-dasharray="1.1 1.3"/><g transform="translate(1.8,0.4) rotate(-40)"><rect x="-8.2" y="-3.6" width="16.4" height="7.2" rx="3.4" fill="#b4b4b4" stroke="#dedede" stroke-width="0.9"/><rect x="-3" y="-3.6" width="6" height="7.2" fill="#8e8e8e"/><path d="M-1.5 -1.6 h0.1 M1.5 -1.6 h0.1 M-1.5 1.6 h0.1 M1.5 1.6 h0.1 M0 0 h0.1" stroke="#4a4a4a" stroke-width="1.1" stroke-linecap="round"/></g></g>
<use href="#tri" x="31.8" y="271"/>
<!-- brush -->
<g transform="translate(22,289.8)"><path d="M7.6 -7.8 L0.2 1.4" stroke="#d2d2d2" stroke-width="2.4" stroke-linecap="round"/><path d="M1.4 2.6 C0.4 6 -3.6 8.2 -9 7.6 C-6 6.4 -5.6 2.4 -2 -0.6 Z" fill="#e0e0e0"/></g>
<use href="#tri" x="31.8" y="297"/>
<!-- stamp -->
<g transform="translate(22,316)" fill="#dcdcdc"><circle cx="0" cy="-5.4" r="2.9"/><path d="M-1.7 -4 H1.7 L2.4 1.2 H-2.4 Z"/><rect x="-7.6" y="1" width="15.2" height="4.4" rx="1"/><rect x="-7.6" y="6.8" width="15.2" height="1.3"/></g>
<use href="#tri" x="31.8" y="323.2"/>
<!-- history brush -->
<g transform="translate(22,342)"><path d="M8 -6.6 L1.6 1" stroke="#d2d2d2" stroke-width="2.3" stroke-linecap="round"/><path d="M2.6 2 C1.8 5.4 -2.6 7.6 -8 7 C-5 5.8 -4.6 2 -1 -0.8 Z" fill="#e0e0e0"/><path d="M-5 -3.4 C-1.5 -6.4 2 -5.4 3.4 -3.4" stroke="#d6d6d6" stroke-width="1.7"/><path d="M-7.8 -3.8 L-3.4 -6.8 L-3.2 -1.6 Z" fill="#d6d6d6"/><path d="M5.6 0.5 C7.4 2.4 7 5 5 6.8" stroke="#222" stroke-width="1.6" stroke-dasharray="1.4 1"/></g>
<use href="#tri" x="31.8" y="349.2"/>
<!-- eraser -->
<g transform="translate(22,367.3)"><path d="M-1.4 -6.9 L8.4 -6.9 L3.4 -1 L-7 -1 Z" fill="#e4e4e4"/><path d="M-7 -1 L3.4 -1 L2.4 5.6 L-8.2 5.6 Z" fill="#c4c4c4"/><path d="M8.4 -6.9 L3.4 -1 L2.4 5.6 L7.6 -0.6 Z" fill="#9c9c9c"/></g>
<use href="#tri" x="31.8" y="374.5"/>
<!-- gradient -->
<rect x="14.2" y="388.4" width="15.8" height="11.4" fill="url(#gg)" stroke="#ececec" stroke-width="1.3"/>
<use href="#tri" x="31.8" y="401.2"/>
<!-- blur drop -->
<g transform="translate(22,419.5)"><path d="M0 -8 C2.4 -3.6 6.3 -0.6 6.3 3 A6.3 5.2 0 0 1 -6.3 3 C-6.3 -0.6 -2.4 -3.6 0 -8 Z" fill="#c8c8c8"/></g>
<use href="#tri" x="31.8" y="426.7"/>
<!-- dodge -->
<g transform="translate(22,446)"><circle cx="-2.6" cy="-2.6" r="5.2" fill="#d4d4d4"/><path d="M1.4 1.4 L7.4 7.4" stroke="#d4d4d4" stroke-width="2.4" stroke-linecap="round"/></g>
<use href="#tri" x="31.8" y="453.2"/>
<!-- sep -->
<path d="M8 460.3 H37" stroke="#3a3a3a"/><path d="M8 461.3 H37" stroke="#626262"/>
<!-- pen -->
<g transform="translate(22,474)"><path d="M-8.6 8.6 L-5.4 -1.6 L1 -5.4 L5.4 -1 L1.6 5.4 Z" fill="#cfcfcf"/><path d="M-8 8 L-1.2 1.2" stroke="#2a2a2a" stroke-width="1.2"/><circle cx="-0.6" cy="0.6" r="1.4" fill="#2a2a2a"/><path d="M2.4 -6.8 L5.6 -9.4 L9.4 -5.6 L6.8 -2.4 Z" fill="#ececec"/></g>
<use href="#tri" x="31.8" y="481.2"/>
<!-- T -->
<text x="22.3" y="507.2" font-family="Liberation Serif, serif" font-size="21" text-anchor="middle" fill="#dcdcdc">T</text>
<use href="#tri" x="31.8" y="507.6"/>
<!-- path select -->
<g transform="translate(22,527)"><path d="M-5.6 -8.2 L-5.6 5.4 L-2.4 2.6 L0 8 L2.6 6.9 L0.3 1.7 L4.6 1.5 Z" fill="#1c1c1c" stroke="#d2d2d2" stroke-width="1.1" stroke-linejoin="round"/></g>
<use href="#tri" x="31.8" y="534.2"/>
<!-- custom shape -->
<g transform="translate(22,553)"><path d="M-1.5 -7.4 C1.8 -8.6 3 -5.6 2.2 -3.4 C4.4 -4.6 8 -5.4 8.4 -2.6 C8.8 0 5.4 0.6 3.8 1.4 C5.4 3.4 5.6 6.8 3 7 C0.4 7.2 0.4 4 -0.6 2.8 C-2.4 4.6 -5.4 8 -7.8 6.2 C-9.8 4.4 -6 1.6 -4.6 0 C-6.6 -1 -8.4 -2.6 -7 -4.4 C-5.6 -6 -3.4 -4.2 -2 -3.6 C-2.6 -4.8 -3 -6.8 -1.5 -7.4 Z" fill="#8c8c8c" stroke="#c4c4c4" stroke-width="1.1"/></g>
<use href="#tri" x="31.8" y="560.2"/>
<!-- sep -->
<path d="M8 567.4 H37" stroke="#3a3a3a"/><path d="M8 568.4 H37" stroke="#626262"/>
<!-- hand -->
<g transform="translate(22,582)"><path d="M-4.6 8.4 C-6 5.4 -8.4 2.8 -8.8 0.6 C-8.2 -0.8 -6.4 -0.2 -5 2 L-5.6 -5.2 C-5.4 -7 -3.4 -7 -3.2 -5.2 L-2.6 -1 L-2.2 -7.4 C-2 -9.2 0.2 -9.2 0.3 -7.4 L0.4 -1.2 L1.4 -6.8 C1.8 -8.4 3.8 -8 3.7 -6.4 L3.2 -0.6 L4.8 -4.2 C5.6 -5.6 7.2 -5 6.9 -3.6 C6.2 0 6.2 4.6 4.4 8.4 Z" fill="#d6d6d6"/></g>
<use href="#tri" x="31.8" y="589.2"/>

<!-- ===== option bar ===== -->
<path d="M8 38.5 H11.5 M8 40.5 H11.5 M8 42.5 H11.5 M8 44.5 H11.5 M8 46.5 H11.5 M8 48.5 H11.5 M8 50.5 H11.5 M8 52.5 H11.5 M8 54.5 H11.5 M8 56.5 H11.5" stroke="#2e2e2e"/>
<use href="#mv" x="35" y="45.9"/>
<path d="M52.6 45.9 H58.4 L55.5 49.2 Z" fill="#dcdcdc"/>
<path d="M64.5 36.5 V58.5" stroke="#393939"/><path d="M65.5 36.5 V58.5" stroke="#606060"/>
<rect x="72.5" y="41.2" width="13" height="12.6" rx="1.5" fill="#606060" stroke="#2c2c2c"/>
<path d="M75 46.6 L78.4 50.6 L85.6 39.6" stroke="#e2e2e2" stroke-width="1.9"/>
</svg>
<!--/TOOLS_SVG-->
<div class="abs" style="left:972px;top:0;width:1px;height:598px;background:#161616"></div><div class="abs" style="left:973px;top:0;width:2px;height:598px;background:#404040"></div>
<div class="abs" style="left:747px;top:597px;width:168px;height:1px;background:repeating-linear-gradient(90deg,#e8e8e8 0 9px,transparent 9px 13px,#e8e8e8 13px 16px,transparent 16px 22px);opacity:.8"></div>
<div class="abs" style="left:772px;top:596px;width:25px;height:2px;background:#454545"></div>
<!-- MENUS -->
<div class="menu" id="m1" style="left:152px;top:24px;width:248.5px;height:447.5px;padding:2.7px 2px 0 2px">
<div class="it "><span class="l" style="left:19.3px">模式<span class="e">(M)</span></span><b class="arr" style="right:6.5px"></b></div>
<div class="sp"><i></i></div>
<div class="it hl"><span class="l" style="left:19.3px">调整<span class="e">(J)</span></span><b class="arr" style="right:6.5px"></b></div>
<div class="sp"><i></i></div>
<div class="it "><span class="l" style="left:19.3px">自动色调<span class="e">(N)</span></span><span class="r" style="right:16px">Shift+Ctrl+L</span></div>
<div class="it "><span class="l" style="left:19.3px">自动对比度<span class="e">(U)</span></span><span class="r" style="right:16px">Alt+Shift+Ctrl+L</span></div>
<div class="it "><span class="l" style="left:19.3px">自动颜色<span class="e">(O)</span></span><span class="r" style="right:16px">Shift+Ctrl+B</span></div>
<div class="sp"><i></i></div>
<div class="it "><span class="l" style="left:19.3px">图像大小<span class="e">(I)...</span></span><span class="r" style="right:16px">Alt+Ctrl+I</span></div>
<div class="it "><span class="l" style="left:19.3px">画布大小<span class="e">(S)...</span></span><span class="r" style="right:16px">Alt+Ctrl+C</span></div>
<div class="it "><span class="l" style="left:19.3px">图像旋转<span class="e">(G)</span></span><b class="arr" style="right:6.5px"></b></div>
<div class="it dis"><span class="l" style="left:19.3px">裁剪<span class="e">(P)</span></span></div>
<div class="it "><span class="l" style="left:19.3px">裁切<span class="e">(R)...</span></span></div>
<div class="it dis"><span class="l" style="left:19.3px">显示全部<span class="e">(V)</span></span></div>
<div class="sp"><i></i></div>
<div class="it "><span class="l" style="left:19.3px">复制<span class="e">(D)...</span></span></div>
<div class="it "><span class="l" style="left:19.3px">应用图像<span class="e">(Y)...</span></span></div>
<div class="it "><span class="l" style="left:19.3px">计算<span class="e">(C)...</span></span></div>
<div class="sp"><i></i></div>
<div class="it dis"><span class="l" style="left:19.3px">变量<span class="e">(B)</span></span><b class="arr" style="right:6.5px"></b></div>
<div class="it dis"><span class="l" style="left:19.3px">应用数据组<span class="e">(L)...</span></span></div>
<div class="sp"><i></i></div>
<div class="it dis"><span class="l" style="left:19.3px">陷印<span class="e">(T)...</span></span></div>
<div class="sp"><i></i></div>
<div class="it "><span class="l" style="left:19.3px">分析<span class="e">(A)</span></span><b class="arr" style="right:6.5px"></b></div>
</div>
<div class="menu" id="m2" style="left:395px;top:54.5px;width:222.5px;height:524.5px;padding:1.2px 2px 0 2px">
<div class="it "><span class="l" style="left:19px">亮度<span class="e">/</span>对比度<span class="e">(C)...</span></span></div>
<div class="it "><span class="l" style="left:19px">色阶<span class="e">(L)...</span></span><span class="r" style="right:16px">Ctrl+L</span></div>
<div class="it "><span class="l" style="left:19px">曲线<span class="e">(U)...</span></span><span class="r" style="right:16px">Ctrl+M</span></div>
<div class="it "><span class="l" style="left:19px">曝光度<span class="e">(E)...</span></span></div>
<div class="sp"><i></i></div>
<div class="it "><span class="l" style="left:19px">自然饱和度<span class="e">(V)...</span></span></div>
<div class="it "><span class="l" style="left:19px">色相<span class="e">/</span>饱和度<span class="e">(H)...</span></span><span class="r" style="right:16px">Ctrl+U</span></div>
<div class="it "><span class="l" style="left:19px">色彩平衡<span class="e">(B)...</span></span><span class="r" style="right:16px">Ctrl+B</span></div>
<div class="it "><span class="l" style="left:19px">黑白<span class="e">(K)...</span></span><span class="r" style="right:16px">Alt+Shift+Ctrl+B</span></div>
<div class="it "><span class="l" style="left:19px">照片滤镜<span class="e">(F)...</span></span></div>
<div class="it "><span class="l" style="left:19px">通道混合器<span class="e">(X)...</span></span></div>
<div class="it "><span class="l" style="left:19px">颜色查找<span class="e">...</span></span></div>
<div class="sp"><i></i></div>
<div class="it hl"><span class="l" style="left:19px">反相<span class="e">(I)</span></span><span class="r" style="right:16px">Ctrl+I</span></div>
<div class="it "><span class="l" style="left:19px">色调分离<span class="e">(P)...</span></span></div>
<div class="it "><span class="l" style="left:19px">阈值<span class="e">(T)...</span></span></div>
<div class="it "><span class="l" style="left:19px">渐变映射<span class="e">(G)...</span></span></div>
<div class="it "><span class="l" style="left:19px">可选颜色<span class="e">(S)...</span></span></div>
<div class="sp"><i></i></div>
<div class="it "><span class="l" style="left:19px">阴影<span class="e">/</span>高光<span class="e">(W)...</span></span></div>
<div class="it "><span class="l" style="left:19px"><span class="e">HDR </span>色调<span class="e">...</span></span></div>
<div class="it "><span class="l" style="left:19px">变化<span class="e">...</span></span></div>
<div class="sp"><i></i></div>
<div class="it "><span class="l" style="left:19px">去色<span class="e">(D)</span></span><span class="r" style="right:16px">Shift+Ctrl+U</span></div>
<div class="it "><span class="l" style="left:19px">匹配颜色<span class="e">(M)...</span></span></div>
<div class="it "><span class="l" style="left:19px">替换颜色<span class="e">(R)...</span></span></div>
<div class="it "><span class="l" style="left:19px">色调均化<span class="e">(Q)</span></span></div>
</div>
</body>
</html>
